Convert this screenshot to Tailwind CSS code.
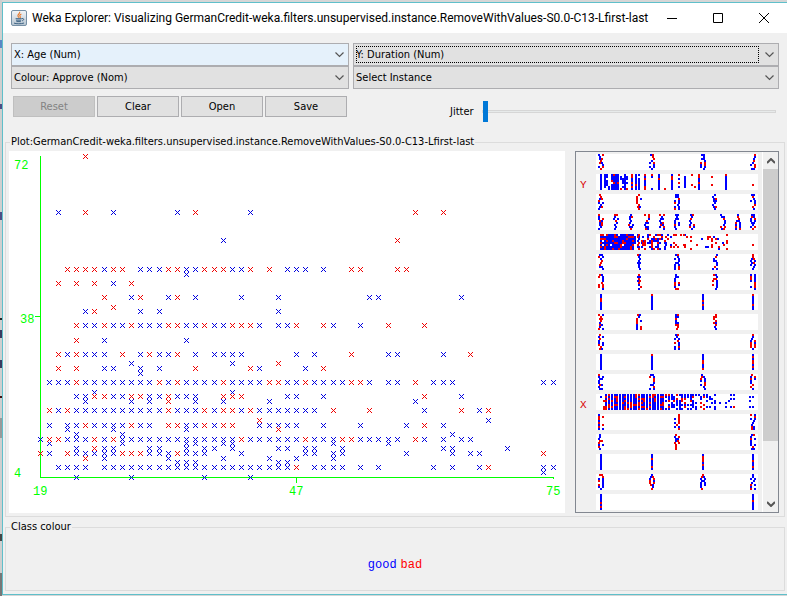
<!DOCTYPE html>
<html lang="en">
<head>
<meta charset="utf-8">
<title>Weka Explorer: Visualizing GermanCredit</title>
<script src="https://cdn.jsdelivr.net/npm/@tailwindcss/browser@4"></script>
</head>
<body class="bg-[#d6d6d6] font-['DejaVu_Sans_Condensed','Noto_Sans',sans-serif] text-[11px] leading-[14px] text-black">
<div class="flex min-h-screen">
  <div class="flex w-[2px] shrink-0 flex-col bg-[#cfcfcf]" aria-hidden="true">
    <i class="mt-[40px] h-[8px] bg-[#5b87c4]"></i>
    <i class="mt-[56px] h-[5px] bg-[#4d4d85]"></i>
    <i class="mt-[103px] h-[8px] bg-[#4d4d85]"></i>
    <i class="mt-[98px] h-[2px] bg-[#222]"></i>
    <i class="mt-[10px] h-[8px] bg-[#3a3a60]"></i>
    <i class="mt-[22px] h-[8px] bg-[#3a3a60]"></i>
    <i class="mt-[28px] h-[2px] bg-[#401010]"></i>
    <i class="mt-[20px] h-[20px] bg-[#9a9a9a]"></i>
    <i class="mt-[96px] h-[7px] bg-[#444]"></i>
    <i class="mt-[32px] flex-1 bg-[#777]"></i>
  </div>
  <div class="flex min-w-0 flex-1 flex-col pt-[2px] pb-px">
    <main class="flex flex-1 flex-col border-y border-l border-[#5fbfca] bg-[#f0f0f0]">
      <header class="flex h-[30px] items-center bg-white pl-2 font-['Roboto',sans-serif] text-[12px] leading-4">
        <svg class="mr-[5px] shrink-0" width="16" height="16" viewBox="0 0 16 16" aria-hidden="true">
          <defs><linearGradient id="tile" x1="0" y1="0" x2="0" y2="1"><stop offset="0" stop-color="#f4f6f8"/><stop offset="1" stop-color="#b4c3d0"/></linearGradient></defs>
          <rect x=".5" y=".5" width="15" height="15" rx="1.5" fill="url(#tile)" stroke="#7690a6"/>
          <path d="M8.6 1.8c1 1.8-2.6 2.6-1.6 4.4.3.6.8 1 .8 1.5M10.4 4c-1.900.8-1.900 1.600-1.300 2.400.5.6.2 1.100-.3 1.500" fill="none" stroke="#e8792a" stroke-width="1.100"/>
          <path d="M4.600 8.700h6.200M5 10.200h5.200M5.400 11.600h4.400M3 13.100c2 .9 7.500.9 10-.1M11 8.600c2.400-.6 2.200 1.800.1 2.200" fill="none" stroke="#3f6484" stroke-width="1"/>
        </svg>
        <h1 class="min-w-0 flex-1 whitespace-nowrap">Weka Explorer: Visualizing GermanCredit-weka.filters.unsupervised.instance.RemoveWithValues-S0.0-C13-Lfirst-last</h1>
        <button class="flex h-[28px] w-[46px] items-center justify-center" aria-label="Minimize"><svg width="10" height="10"><path d="M0 5.500h10" stroke="#000"/></svg></button>
        <button class="flex h-[28px] w-[46px] items-center justify-center" aria-label="Maximize"><svg width="10" height="10"><path d="M.5.5h9v9h-9z" fill="none" stroke="#000"/></svg></button>
        <button class="flex h-[28px] w-[46px] items-center justify-center" aria-label="Close"><svg width="10" height="10"><path d="M0 0l10 10M10 0L0 10" stroke="#000"/></svg></button>
      </header>

      <section class="grid grid-cols-[338fr_426fr] gap-x-1 pt-[10px] pr-2 pl-2">
        <div class="relative"><select aria-label="X axis" class="block h-[23px] w-full appearance-none border border-[#adadb0] bg-[#e5f1fb] pl-[2px]"><option>X: Age (Num)</option></select>
          <svg class="pointer-events-none absolute top-[9px] right-[5px]" width="9" height="6"><path d="M.5.500l4 4 4-4" fill="none" stroke="#555" stroke-width="1.200"/></svg></div>
        <div class="relative"><select aria-label="Y axis" class="block h-[23px] w-full appearance-none border border-[#adadb0] bg-[#e1e1e1] pl-[2px]"><option>Y: Duration (Num)</option></select>
          <span class="pointer-events-none absolute top-[3px] right-[20px] bottom-[3px] left-[3px] border border-dotted border-black"></span>
          <svg class="pointer-events-none absolute top-[9px] right-[5px]" width="9" height="6"><path d="M.5.500l4 4 4-4" fill="none" stroke="#555" stroke-width="1.200"/></svg></div>
        <div class="relative"><select aria-label="Colour" class="block h-[23px] w-full appearance-none border border-[#adadb0] bg-[#e1e1e1] pl-[2px]"><option>Colour: Approve (Nom)</option></select>
          <svg class="pointer-events-none absolute top-[9px] right-[5px]" width="9" height="6"><path d="M.5.500l4 4 4-4" fill="none" stroke="#555" stroke-width="1.200"/></svg></div>
        <div class="relative"><select aria-label="Selection shape" class="block h-[23px] w-full appearance-none border border-[#adadb0] bg-[#e1e1e1] pl-[2px]"><option>Select Instance</option></select>
          <svg class="pointer-events-none absolute top-[9px] right-[5px]" width="9" height="6"><path d="M.5.500l4 4 4-4" fill="none" stroke="#555" stroke-width="1.200"/></svg></div>
        <div class="grid grid-cols-4 gap-[2px] pt-[7px] pr-[2px] pl-[2px]">
          <button disabled class="h-[21px] border border-[#bfbfbf] bg-[#ccc] text-[#838383]">Reset</button>
          <button class="h-[21px] border border-[#adadb0] bg-[#e1e1e1]">Clear</button>
          <button class="h-[21px] border border-[#adadb0] bg-[#e1e1e1]">Open</button>
          <button class="h-[21px] border border-[#adadb0] bg-[#e1e1e1]">Save</button>
        </div>
        <div class="flex items-center pt-[12px] pr-[3px] pl-[97px]">
          <label for="jitter" class="w-[32px] shrink-0">Jitter</label>
          <input id="jitter" type="range" min="0" max="50" value="0" class="h-[21px] min-w-0 flex-1 appearance-none bg-transparent [&::-webkit-slider-runnable-track]:h-[3px] [&::-webkit-slider-runnable-track]:border [&::-webkit-slider-runnable-track]:border-[#d6d6d6] [&::-webkit-slider-runnable-track]:bg-[#e7eaea] [&::-webkit-slider-thumb]:-mt-[10px] [&::-webkit-slider-thumb]:h-[21px] [&::-webkit-slider-thumb]:w-[5px] [&::-webkit-slider-thumb]:appearance-none [&::-webkit-slider-thumb]:bg-[#0078d7]">
        </div>
      </section>

      <fieldset class="mx-[2px] mt-[13px] min-w-0 border border-[#dcdcdc] px-[3px] pt-[2px] pb-[3px]">
        <legend class="ml-px px-px">Plot:GermanCredit-weka.filters.unsupervised.instance.RemoveWithValues-S0.0-C13-Lfirst-last</legend>
        <div class="flex gap-[10px] pr-[2px]">
          <div class="min-w-0 flex-1 bg-white">
            <svg id="plot" class="block font-['Liberation_Mono',monospace] text-[12px]" width="556" height="362" viewBox="9 151 556 362" shape-rendering="crispEdges" role="img" aria-label="Duration against age, coloured by approval">
              <g fill="#00ff00">
                <path d="M40 156h1v322h-1zM40 477h514v1H40zM35 316h5v1h-5zM296 478h1v5h-1zM553 478h1v1h-1z"/>
                <text x="14" y="169">72</text><text x="20" y="323">38</text><text x="14" y="477">4</text>
                <text x="33" y="495">19</text><text x="289" y="495">47</text><text x="546" y="495">75</text>
              </g>
              <path id="good" fill="#0000e0"/><path id="bad" fill="#f00000"/>
            </svg>
          </div>
          <div class="flex w-[204px] shrink-0 border border-[#828790]">
            <svg id="bars" class="block w-[187px] border-r border-white font-['Liberation_Mono',monospace] text-[11px]" height="360" viewBox="576 152 186 360" shape-rendering="crispEdges" role="img" aria-label="Attribute strips">
              <path id="strips" fill="#fff"/><path id="sgood" fill="#0000ff"/><path id="sbad" fill="#f00000"/>
              <text x="580" y="188" fill="#d80000">Y</text><text x="580" y="408" fill="#d80000">X</text>
            </svg>
            <div class="flex flex-1 flex-col items-center">
              <button class="flex h-[17px] w-full items-center justify-center" aria-label="Scroll up"><svg width="8" height="6"><path d="M0 5l4-4 4 4" fill="none" stroke="#555" stroke-width="2"/></svg></button>
              <div class="h-[272px] w-full bg-[#cdcdcd]"></div>
              <div class="flex-1"></div>
              <button class="flex h-[17px] w-full items-center justify-center" aria-label="Scroll down"><svg width="8" height="6"><path d="M0 1l4 4 4-4" fill="none" stroke="#555" stroke-width="2"/></svg></button>
            </div>
          </div>
        </div>
      </fieldset>

      <fieldset class="mx-[2px] mt-[3px] mb-[3px] flex min-w-0 flex-1 flex-col border border-[#dcdcdc]">
        <legend class="ml-1 px-px">Class colour</legend>
        <div class="flex justify-center gap-1 pt-6 font-['Liberation_Mono',monospace] text-[12px] leading-[14px]">
          <span class="text-[#0000ff]">good</span><span class="text-[#ff0000]">bad</span>
        </div>
      </fieldset>
    </main>
  </div>
</div>
<script>
// Each entry: duration, then years above 19 with g (good) or r (bad); a-b is a run.
const rows = `72:5r
60:2g 5r 8g 15g 17r 23g 41r 44r
54:20g 39r
48:3-6r 7g 8-9r 11-13g 14-15r 16-17g 18-20r 21-22g 23r 25r 27-29g 31g 34-35r 39-40r
47:16g
45:2r 4r 6r 8g 10r
42:7r 10g 11r 14g 15r 17g 22g 26g 36-37g 46g
40:8r
39:5g 6r 11g 13g 26g
36:4r 5-6g 7r 8-9g 10r 11-13g 14-15r 16-17g 18r 19-20g 21-23r 24g 26-27g 28r 31r 32g 35g 38r 42r
33:4r 7g 16g
30:2r 3g 4r 5-7g 9r 11g 12r 13-14g 15r 17g 19-22g 28g 30g 34r 38-39g 44g 47r
28:10g 21g 26r
27:2r 4r 7-8g 11g 13g 17r 23r 24g 29g 31r
26:11g
24:1-3g 4r 5-12g 13r 14g 15r 16-19g 20r 21-24g 25-26r 27-28g 29r 30-33g 34-35r 36g 38-39g 41r 43-45g 55-56g
22:6g 21g
21:4-5g 6-7r 8-9g 10-11r 12-13g 14r 15-17g 20-22r 27-28g 31g 42r 46g
20:5g 10g 12g 14r 17g 20g 25g 41g
18:1r 2g 3r 4-13g 14r 15-17g 18r 19g 20-21r 22g 23r 24-30g 32r 36r 42g 46r 48g 49r
16:24r 49g
15:1g 3-4g 5r 6-9g 10r 11-12g 14-15r 16-17g 18r 19g 20-21r 24-28g 31g 35g 40g 42r 44g
14:3g 8g 16g 26r
13:4g 9g 45g
12:0g 1-2r 3-5g 6r 7g 8r 9-21g 22r 23-28g 29r 30-32g 33-34r 35-39g 41r 42g 44g 46-47g
11:1g 9g 16-17g 20-21g 32g 38g
10:4g 6r 7-8g 12-13g 16g 18-19g 21g 26-27g 29-30g 33g 44-45g 51g
9:0r 1g 3r 4-8g 9-11r 12-14g 15r 16-18g 22g 29-30g 32-33g 40g 45g 47-48g 55r
8:5r 7g 14g 20g 25g 28g 32g
7:15-17g 26-27g
6:2-5g 7-27g 28r 30-33g 35g 37g 43g 45g 48g 49r 55-56g
5:55g
4:4g 10g 18g 23g`;
const out = {g: '', r: ''};
for (const line of rows.split('\n')) {
  const [d, list] = line.split(':');
  const y = Math.floor(156 + (72 - d) * 321 / 68);
  for (const t of list.split(' ')) {
    const c = t.slice(-1), [a, b = a] = t.slice(0, -1).split('-').map(Number);
    for (let i = a; i <= b; i++) {
      const x = Math.floor(40 + i * 513 / 56);
      for (let k = -2; k <= 2; k++) {
        out[c] += `M${x + k} ${y + k}h1v1h-1z`;
        if (k) out[c] += `M${x + k} ${y - k}h1v1h-1z`;
      }
    }
  }
}
good.setAttribute('d', out.g);
bad.setAttribute('d', out.r);

let seed = 11;
const rnd = () => (seed = (seed * 16807) % 2147483647) / 2147483647;
const s = {g: '', r: ''};
const dot = (x, y, red) => { s[red ? 'r' : 'g'] += `M${Math.round(x)} ${y}h2v2h-2z`; };
const column = (x, y, fill, red) => { for (let k = 0; k < 8; k++) if (rnd() < fill) dot(x, y + 2 * k, rnd() < red); };
const jitter = (x, y, red) => {
  let o = 0;
  for (let k = 0; k < 8; k++) {
    o = Math.max(-2, Math.min(2, o + Math.round(rnd() * 4 - 2)));
    dot(x + o, y + 2 * k, rnd() < red);
    if (rnd() < .5) dot(x - o, y + 2 * k, rnd() < red);
  }
};
const four = [0, 51, 102, 152], five = [0, 38, 76, 114, 152], three = [0, 76, 152];
const nominal = {0: four, 2: five, 3: [0, 15, 30, 46, 61, 76, 91, 122, 137, 152], 5: five, 6: five,
  8: five.slice(0, 4), 9: three, 11: four, 13: three, 14: three, 16: four};
const solid = {7: four, 10: four, 15: four, 17: [0, 152]};
let bg = '';
for (let n = 0; n < 18; n++) {
  const y = 154 + 20 * n;
  bg += `M596 ${y}h162v16h-162z`;
  (nominal[n] || []).forEach((c, i) => jitter(600 + c, y, n === 2 && i === 1 ? .7 : n > 12 && i === 1 ? .55 : .35));
  (solid[n] || []).forEach(c => column(600 + c, y, 1, .22));
}
strips.setAttribute('d', bg);
[[0,1,0],[4,.9,.1],[6,.6,0],[8,.6,.1],[11,.9,.3],[13,.9,.3],[15,.9,.2],[17,1,.1],[20,.5,.1],[22,.5,.1],[24,.9,.1],[26,.4,.3],
 [31,1,.3],[35,.9,.2],[38,.9,.3],[44,1,.3],[51,.5,.3],[58,1,.3],[64,.2,1],[71,1,.3],[78,.5,.5],[84,.5,.1],[91,.5,1],
 [94,.2,.8],[98,1,.5],[111,.25,1],[125,.9,.3]].forEach(([x, f, r]) => column(600 + x, 174, f, r));
dot(752, 184, true);
for (let x = 0; x < 131; x += 2) {
  const f = x < 34 ? .97 : x < 46 ? .65 : x < 66 ? .5 : x < 90 ? .25 : .12;
  column(600 + x + (x > 34 ? rnd() * 2 : 0), 234, f, x < 34 ? .25 : x < 66 ? .42 : .65);
}
dot(752, 244, true);
for (let a = 0; a < 50; a++) {
  const f = a < 1 ? .3 : a < 2 ? .7 : a < 24 ? 1 : a < 36 ? .7 : a < 40 ? .4 : .25;
  column(600 + a * 152 / 56, 394, f, a < 16 ? .3 : .2);
}
column(749, 394, .4, 0);
dot(752, 396); dot(752, 406);
sgood.setAttribute('d', s.g);
sbad.setAttribute('d', s.r);
</script>
</body>
</html>
